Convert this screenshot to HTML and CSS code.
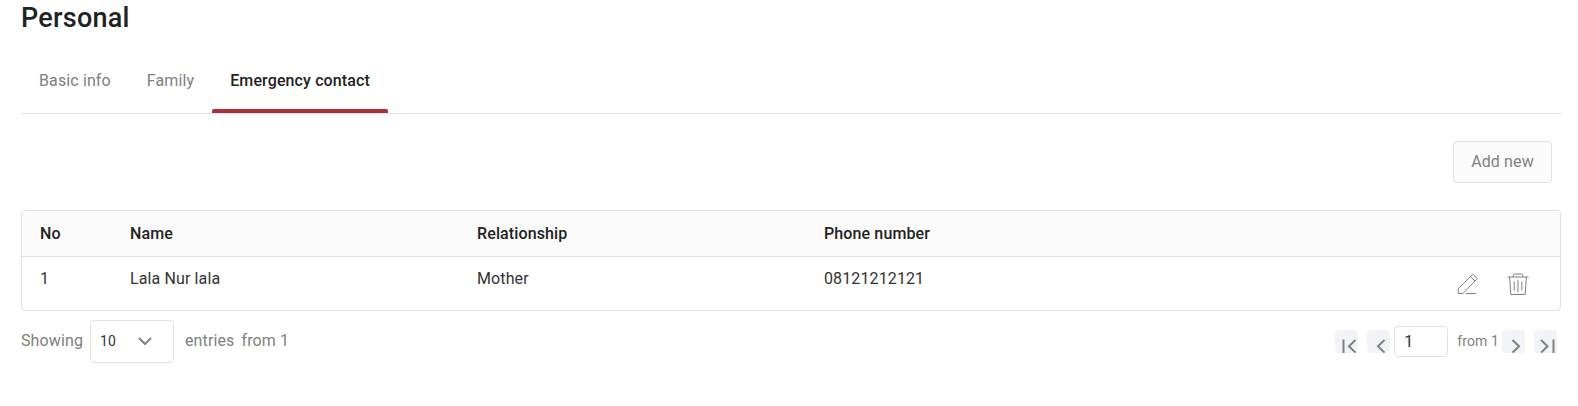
FILE: index.html
```html
<!DOCTYPE html>
<html lang="en">
<head>
    <meta charset="UTF-8">
    <meta name="viewport" content="width=device-width, initial-scale=1.0">
    <title>Personal</title>
    <link rel="stylesheet" href="styles.css">
</head>
<body>

    <h2 class="title">Personal</h2>

    <nav class="tabs">
        <a class="tab">Basic info</a>
        <a class="tab">Family</a>
        <a class="tab active">Emergency contact</a>
    </nav>

    <div class="actions">
        <button type="button" class="btn-add">Add new</button>
    </div>

    <div class="table">
        <div class="row head">
            <div>No</div>
            <div>Name</div>
            <div>Relationship</div>
            <div>Phone number</div>
            <div></div>
        </div>
        <div class="row">
            <div>1</div>
            <div>Lala Nur lala</div>
            <div>Mother</div>
            <div>08121212121</div>
            <div class="row-icons">
                <svg width="22" height="22" viewBox="0 0 22 22">
                    <path d="M1.2 20.5V15.8L15.8 1.2L20.4 5.6L5.8 20.5ZM13.4 3.6L18 8M8.6 20.5H19.2"/>
                </svg>
                <svg width="22" height="23" viewBox="0 0 22 23">
                    <path d="M0.5 4H21.5M2.7 4L3.8 21.5H18.2L19.3 4M6.2 4V2.4Q6.2 1 7.6 1H14.4Q15.8 1 15.8 2.4V4M7.2 8.5V17.5M11 7.2V19M14.8 8.5V17.5"/>
                </svg>
            </div>
        </div>
    </div>

    <div class="footer">
        <div class="entries">
            <span class="label">Showing</span>
            <div class="select">
                <span>10</span>
                <svg width="14" height="8" viewBox="0 0 14 8"><path d="M1 1L7 7L13 1"/></svg>
            </div>
            <span class="label">entries</span>
            <span class="label total">from 1</span>
        </div>
        <div class="pager">
            <button type="button" class="page-btn">
                <svg width="23" height="23" viewBox="0 0 23 23"><path d="M8.5 9.5V23M20.5 10L14 16.3L20.5 22.6"/></svg>
            </button>
            <button type="button" class="page-btn prev">
                <svg width="23" height="23" viewBox="0 0 23 23"><path d="M17.5 10L11 16.3L17.5 22.6"/></svg>
            </button>
            <input type="text" class="page-input" value="1">
            <span class="page-total">from 1</span>
            <button type="button" class="page-btn next">
                <svg width="23" height="23" viewBox="0 0 23 23"><path d="M10.5 10L17 16.3L10.5 22.6"/></svg>
            </button>
            <button type="button" class="page-btn">
                <svg width="23" height="23" viewBox="0 0 23 23"><path d="M7 10L13.5 16.3L7 22.6M19.5 9.5V23"/></svg>
            </button>
        </div>
    </div>

</body>
</html>
```

FILE: styles.css
```css
* {
    box-sizing: border-box;
}

body {
    margin: 0;
    padding: 0 17px 0 21px;
    font-family: Roboto, sans-serif;
    font-size: 16px;
    letter-spacing: 0.12px;
    color: #222;
    background-color: #fff;
}

.title {
    margin: 0;
    height: 48px;
    padding-top: 1px;
    font-size: 27px;
    font-weight: 500;
    line-height: 35px;
    letter-spacing: 0.25px;
}

.tabs {
    display: flex;
    height: 66px;
    border-bottom: 1px solid #e0e0e0;
}

.tab {
    height: 65px;
    padding: 0 18px;
    line-height: 65px;
    color: #808080;
}

.tab.active {
    position: relative;
    color: #222;
    font-weight: 500;
}

.tab.active::after {
    content: "";
    position: absolute;
    left: 0;
    right: 0;
    bottom: 0;
    height: 4px;
    background-color: #a92f3a;
    border-radius: 2px 2px 0 0;
}

.actions {
    display: flex;
    justify-content: flex-end;
    padding: 27px 9px 27px 0;
}

.btn-add {
    width: 99px;
    height: 42px;
    padding: 0 0 2px;
    font: inherit;
    letter-spacing: inherit;
    color: #808080;
    background-color: #fbfbfb;
    border: 1px solid #e0e0e0;
    border-radius: 4px;
}

.table {
    height: 101px;
    border: 1px solid #e0e0e0;
    border-radius: 4px;
    overflow: hidden;
}

.row {
    display: grid;
    grid-template-columns: 90px 347px 347px 1fr 106px;
    padding-left: 18px;
    height: 53px;
    line-height: 43px;
    color: #333;
}

.row.head {
    height: 46px;
    line-height: 45px;
    font-weight: 500;
    color: #222;
    background-color: #fbfbfb;
    border-bottom: 1px solid #e0e0e0;
}

svg {
    display: block;
    fill: none;
    stroke: #808080;
}

.row-icons {
    display: flex;
    gap: 28px;
    padding-top: 16px;
    padding-left: 3px;
}

.footer {
    display: flex;
    justify-content: space-between;
    padding-top: 9px;
    color: #808080;
}

.entries {
    display: flex;
    align-items: center;
}

.label {
    padding-bottom: 2px;
}

.select {
    display: flex;
    align-items: center;
    justify-content: space-between;
    width: 84px;
    height: 43px;
    margin: 0 11px 0 7px;
    padding: 0 21px 1px 9px;
    font-size: 14px;
    color: #333;
    border: 1px solid #e0e0e0;
    border-radius: 4px;
}

.select svg {
    stroke-width: 2;
}

.total {
    margin-left: 7px;
}

.pager {
    display: flex;
    height: 43px;
    padding-right: 4px;
    align-items: center;
}

.page-btn {
    width: 23px;
    height: 23px;
    padding: 0;
    background-color: #f2f3f7;
    border: 0;
    border-radius: 4px;
}

.page-btn svg {
    stroke-width: 2;
}

.page-btn.prev {
    margin: 0 4px 0 9px;
}

.page-btn.next {
    margin: 0 9px 0 4px;
}

.page-input {
    width: 54px;
    height: 31px;
    padding: 0 9px;
    font: inherit;
    color: #333;
    border: 1px solid #e0e0e0;
    border-radius: 4px;
}

.page-total {
    margin-left: 9px;
    margin-right: -1px;
    padding-bottom: 1px;
    font-size: 14px;
}
```
